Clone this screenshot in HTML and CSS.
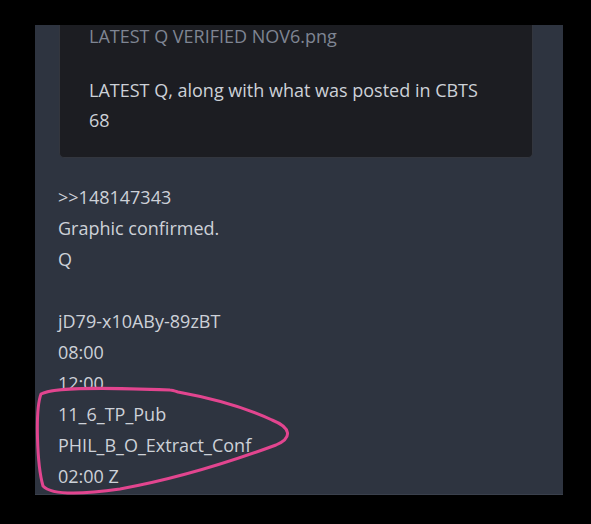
FILE: index.html
```html
<!DOCTYPE html>
<html lang="en">
<head>
<meta charset="UTF-8">
<meta name="viewport" content="width=device-width, initial-scale=1.0">
<title>Q post</title>
<link rel="stylesheet" href="styles.css">
</head>
<body>

<div class="post">
  <div class="quote-card">
    <div class="file-name">LATEST Q VERIFIED NOV6.png</div>
    <p class="quote-text">LATEST Q, along with what was posted in CBTS 68</p>
  </div>

  <div class="post-body">
    <div>&gt;&gt;148147343</div>
    <div>Graphic confirmed.</div>
    <div>Q</div>
    <div>&nbsp;</div>
    <div>jD79-x10ABy-89zBT</div>
    <div>08:00</div>
    <div>12:00</div>
    <div>11_6_TP_Pub</div>
    <div>PHIL_B_O_Extract_Conf</div>
    <div>02:00 Z</div>
  </div>
</div>

<!-- hand drawn highlight over the last lines -->
<svg class="scribble" width="591" height="524" viewBox="0 0 591 524">
  <path d="M170 390 C 120 388, 55 386, 41 394 C 35 410, 37 465, 43 486 C 52 496, 85 494, 120 489 C 170 480, 230 462, 276 445 C 292 438, 292 428, 272 420 C 240 405, 200 396, 178 392 C 175 391, 172 390, 170 390 Z"
        fill="none" stroke="#e2458f" stroke-width="3" stroke-linejoin="round"/>
</svg>

</body>
</html>
```

FILE: styles.css
```css
body {
  margin: 0;
  padding: 25px 0 0 0;
  background-color: #000;
  font-family: "Open Sans", "Noto Sans", sans-serif;
  height: 524px;
  box-sizing: border-box;
  overflow: hidden;
}

.post {
  margin-left: 35px;
  width: 528px;
  height: 470px;
  background-color: #2e3440;
  border-bottom: 1px solid #3a404c;
  box-sizing: border-box;
}

.quote-card {
  margin-left: 24px;
  width: 474px;
  box-sizing: border-box;
  padding: 0 50px 22px 29px;
  background-color: #1c1d22;
  border: 1px solid #33363e;
  border-top: none;
  border-radius: 0 0 5px 5px;
}

.file-name {
  color: #7f8593;
  font-size: 18px;
  line-height: 22px;
}

.quote-text {
  margin: 28px 0 0 0;
  color: #cdd1d8;
  font-size: 18px;
  line-height: 30px;
}

.post-body {
  padding: 24px 0 0 23px;
  color: #cdd1d8;
  font-size: 18px;
  line-height: 31px;
}

.scribble {
  position: absolute;
  left: 0;
  top: 0;
}
```
